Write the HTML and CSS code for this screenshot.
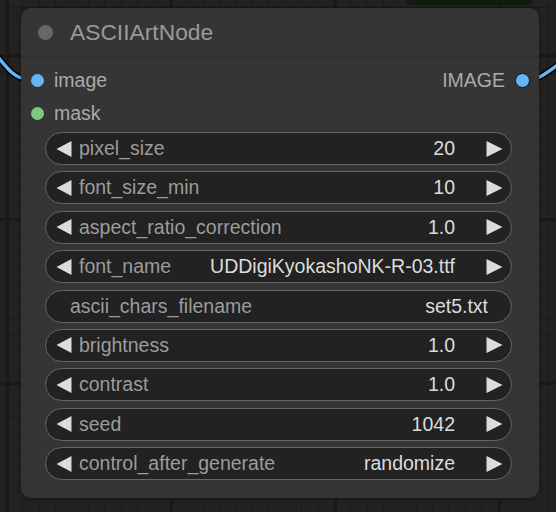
FILE: index.html
```html
<!DOCTYPE html>
<html>
<head>
<meta charset="utf-8">
<link rel="stylesheet" href="styles.css">
</head>
<body>
<div class="canvas">
  <div class="other-node"></div>
  <svg class="wires" width="556" height="512" viewBox="0 0 556 512">
    <path d="M -12 46 C 4 62, 10 77, 26 79" class="wire-outline"/>
    <path d="M -12 46 C 4 62, 10 77, 26 79" class="wire"/>
    <path d="M 526 80 C 540 80, 547 72, 562 62" class="wire-outline"/>
    <path d="M 526 80 C 540 80, 547 72, 562 62" class="wire"/>
  </svg>
  <div class="node">
    <div class="node-header">
      <span class="title-dot"></span>
      <span class="title">ASCIIArtNode</span>
    </div>
    <div class="node-body">
      <div class="slot-row">
        <div class="slot-in"><span class="dot dot-image"></span><span>image</span></div>
        <div class="slot-out"><span>IMAGE</span><span class="dot dot-image dot-out"></span></div>
      </div>
      <div class="slot-row">
        <div class="slot-in"><span class="dot dot-mask"></span><span>mask</span></div>
      </div>
      <div class="widgets">
        <div class="widget">
          <svg class="arrow" viewBox="0 0 16 16"><polygon points="16,0 16,16 1,8"/></svg>
          <span class="label">pixel_size</span><span class="value">20</span>
          <svg class="arrow" viewBox="0 0 16 16"><polygon points="0,0 0,16 16,8"/></svg>
        </div>
        <div class="widget">
          <svg class="arrow" viewBox="0 0 16 16"><polygon points="16,0 16,16 1,8"/></svg>
          <span class="label">font_size_min</span><span class="value">10</span>
          <svg class="arrow" viewBox="0 0 16 16"><polygon points="0,0 0,16 16,8"/></svg>
        </div>
        <div class="widget">
          <svg class="arrow" viewBox="0 0 16 16"><polygon points="16,0 16,16 1,8"/></svg>
          <span class="label">aspect_ratio_correction</span><span class="value">1.0</span>
          <svg class="arrow" viewBox="0 0 16 16"><polygon points="0,0 0,16 16,8"/></svg>
        </div>
        <div class="widget">
          <svg class="arrow" viewBox="0 0 16 16"><polygon points="16,0 16,16 1,8"/></svg>
          <span class="label">font_name</span><span class="value">UDDigiKyokashoNK-R-03.ttf</span>
          <svg class="arrow" viewBox="0 0 16 16"><polygon points="0,0 0,16 16,8"/></svg>
        </div>
        <div class="widget widget-text">
          <span class="label">ascii_chars_filename</span><span class="value">set5.txt</span>
        </div>
        <div class="widget">
          <svg class="arrow" viewBox="0 0 16 16"><polygon points="16,0 16,16 1,8"/></svg>
          <span class="label">brightness</span><span class="value">1.0</span>
          <svg class="arrow" viewBox="0 0 16 16"><polygon points="0,0 0,16 16,8"/></svg>
        </div>
        <div class="widget">
          <svg class="arrow" viewBox="0 0 16 16"><polygon points="16,0 16,16 1,8"/></svg>
          <span class="label">contrast</span><span class="value">1.0</span>
          <svg class="arrow" viewBox="0 0 16 16"><polygon points="0,0 0,16 16,8"/></svg>
        </div>
        <div class="widget">
          <svg class="arrow" viewBox="0 0 16 16"><polygon points="16,0 16,16 1,8"/></svg>
          <span class="label">seed</span><span class="value">1042</span>
          <svg class="arrow" viewBox="0 0 16 16"><polygon points="0,0 0,16 16,8"/></svg>
        </div>
        <div class="widget">
          <svg class="arrow" viewBox="0 0 16 16"><polygon points="16,0 16,16 1,8"/></svg>
          <span class="label">control_after_generate</span><span class="value">randomize</span>
          <svg class="arrow" viewBox="0 0 16 16"><polygon points="0,0 0,16 16,8"/></svg>
        </div>
      </div>
    </div>
  </div>
</div>
</body>
</html>
```

FILE: styles.css
```css
html, body {
  margin: 0;
  padding: 0;
}

body {
  width: 556px;
  height: 512px;
  overflow: hidden;
  font-family: "Liberation Sans", Arial, sans-serif;
  background-color: #222;
  background-image:
    linear-gradient(to right, #191919 0 3px, transparent 3px),
    linear-gradient(to bottom, #191919 0 3px, transparent 3px),
    linear-gradient(to right, #1b1b1b 0 1px, transparent 1px),
    linear-gradient(to bottom, #1b1b1b 0 1px, transparent 1px);
  background-size: 164px 164px, 164px 164px, 16.4px 16.4px, 16.4px 16.4px;
  background-position: 6px 0, 0 218px, 6px 0, 0 7px;
}

.canvas {
  position: relative;
  width: 556px;
  height: 512px;
  padding-top: 8px;
  padding-left: 21px;
  box-sizing: border-box;
}

.other-node {
  position: absolute;
  left: 405px;
  top: -10px;
  width: 128px;
  height: 15px;
  background: #0f1d10;
  border-radius: 0 0 8px 8px;
}

.wires {
  position: absolute;
  left: 0;
  top: 0;
}

.wire-outline {
  fill: none;
  stroke: #000;
  stroke-width: 6.5;
}

.wire {
  fill: none;
  stroke: #64b5f6;
  stroke-width: 3.5;
}

.node {
  position: relative;
  width: 518px;
  height: 490px;
  background: #353535;
  border-radius: 10px;
  box-shadow: 0 0 4px rgba(0, 0, 0, 0.4);
  display: flex;
  flex-direction: column;
}

.node-header {
  height: 50px;
  border-bottom: 1px solid #2b2b2b;
  display: flex;
  align-items: center;
  padding-left: 17px;
  box-sizing: border-box;
}

.title-dot {
  width: 15px;
  height: 15px;
  border-radius: 50%;
  background: #686868;
  margin-right: 17px;
}

.title {
  color: #9a9a9a;
  font-size: 22.8px;
}

.node-body {
  padding: 6px 27px 0 24px;
  display: flex;
  flex-direction: column;
}

.slot-row {
  height: 33px;
  display: flex;
  align-items: center;
  justify-content: space-between;
  margin-left: -14px;
  margin-right: -18px;
  color: #aaa;
  font-size: 19.5px;
}

.slot-in, .slot-out {
  display: flex;
  align-items: center;
}

.dot {
  width: 13px;
  height: 13px;
  border-radius: 50%;
  box-sizing: border-box;
}

.slot-in .dot {
  margin-right: 10px;
}

.dot-image {
  background: #64b5f6;
}

.dot-mask {
  background: #81c784;
}

.dot-out {
  border: 1.5px solid #111;
  width: 15px;
  height: 15px;
  margin-left: 10px;
}

.widgets {
  margin-top: 2px;
  display: flex;
  flex-direction: column;
  gap: 6.375px;
}

.widget {
  height: 33px;
  box-sizing: border-box;
  border: 1.5px solid #666;
  border-radius: 17px;
  background: #222;
  display: flex;
  align-items: center;
  padding: 0 8px 0 9px;
  font-size: 19.5px;
}

.widget-text {
  padding: 0 23px 0 24px;
}

.arrow {
  width: 17px;
  height: 16px;
  fill: #dcdcdc;
  flex: none;
}

.label {
  color: #9c9c9c;
  margin-left: 7px;
}

.widget-text .label {
  margin-left: 0;
}

.value {
  color: #dcdcdc;
  margin-left: auto;
  margin-right: 31px;
  white-space: nowrap;
}

.widget-text .value {
  margin-right: 0;
}
```
